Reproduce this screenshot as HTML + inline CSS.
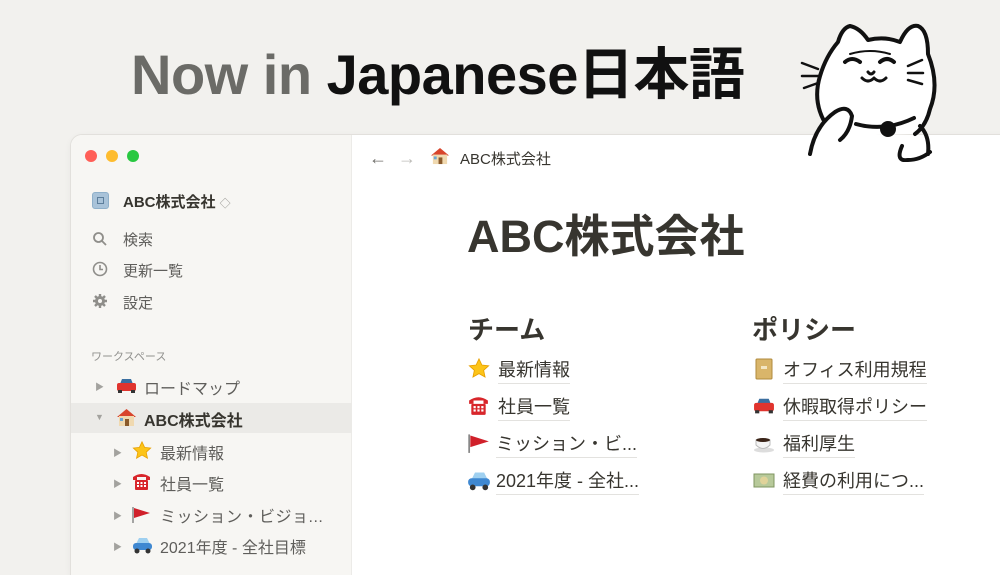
<!DOCTYPE html>
<html><head><meta charset="utf-8"><style>
*{margin:0;padding:0;box-sizing:border-box}
body{width:1000px;height:563px;overflow:hidden;background:#f2f1ee;font-family:"Liberation Sans","Noto Sans CJK JP",sans-serif;position:relative}
.abs{position:absolute;white-space:nowrap}
h1{position:absolute;left:131px;top:40px;font-size:56px;font-weight:700;letter-spacing:-0.5px;color:#111;white-space:nowrap;line-height:70px}
h1 .g{color:#6b6b67}
.win{position:absolute;left:71px;top:135px;width:940px;height:440px;background:#fff;border-radius:11px 0 0 0;overflow:hidden;box-shadow:0 0 0 1px #e2e0dc,0 2px 8px rgba(0,0,0,.06)}
.side{position:absolute;left:0;top:0;width:281px;height:440px;background:#f7f6f3;border-right:1px solid #ecebe8}
.dot{position:absolute;top:15px;width:12px;height:12px;border-radius:50%}
.s{font-size:15px;color:#5f5e5b}
.t{font-size:15px;color:#37352f}
.arr{font-size:9px;color:#a3a29e}
.it{font-size:18px;color:#37352f;border-bottom:1px solid #e3e2df;padding-bottom:1px}
</style></head><body>
<h1><span class="g">Now in </span>Japanese日本語</h1>

<div class="win">
 <div class="side">
  <div class="dot" style="left:14px;background:#ff5f57"></div>
  <div class="dot" style="left:35px;background:#febc2e"></div>
  <div class="dot" style="left:56px;background:#28c840"></div>
  <div class="abs" style="left:21px;top:57px;width:17px;height:17px;background:#a9c3d9;border-radius:3px;border:1px solid #8fb0ca"><div style="margin:4px;width:7px;height:7px;border:1px solid #5d7f9c"></div></div>
  <div class="abs t" style="left:52px;top:56px;font-weight:600">ABC株式会社 <span style="color:#a3a29e;font-size:11px">◇</span></div>
  <svg class="abs" style="left:21px;top:96px" width="16" height="16" viewBox="0 0 16 16" fill="none" stroke="#8f8e8a" stroke-width="1.8"><circle cx="6.5" cy="6.5" r="4.5"/><path d="M10 10l4 4"/></svg>
  <div class="abs s" style="left:52px;top:94px">検索</div>
  <svg class="abs" style="left:21px;top:126px" width="16" height="16" viewBox="0 0 16 16" fill="none" stroke="#8f8e8a" stroke-width="1.6"><circle cx="8" cy="8" r="6.5"/><path d="M8 4v4.5h3"/></svg>
  <div class="abs s" style="left:52px;top:125px">更新一覧</div>
  <svg class="abs" style="left:21px;top:158px" width="16" height="16" viewBox="0 0 16 16"><circle cx="8" cy="8" r="5" fill="#8f8e8a"/><g stroke="#8f8e8a" stroke-width="2.4"><path d="M8 1v14M1 8h14M3 3l10 10M13 3L3 13"/></g><circle cx="8" cy="8" r="2" fill="#f7f6f3"/></svg>
  <div class="abs s" style="left:52px;top:157px">設定</div>
  <div class="abs" style="left:20px;top:213px;font-size:11px;color:#91918e">ワークスペース</div>

  <div class="abs arr" style="left:24px;top:245px">▶</div>
  <svg class="abs" style="left:45px;top:242px" width="21" height="17" viewBox="0 0 21 17"><path d="M4 7l2-5h9l2 5z" fill="#3b6fa0"/><rect x="1" y="6" width="19" height="8" rx="2" fill="#e0342e"/><rect x="2" y="13" width="4" height="3" fill="#333"/><rect x="15" y="13" width="4" height="3" fill="#333"/></svg>
  <div class="abs s" style="left:73px;top:240px;font-size:16px">ロードマップ</div>

  <div class="abs" style="left:0;top:268px;width:281px;height:30px;background:#ebeae7"></div>
  <div class="abs arr" style="left:24px;top:277px">▼</div>
  <svg class="abs" style="left:45px;top:273px" width="21" height="19" viewBox="0 0 21 19"><path d="M1 9L10.5 1 20 9z" fill="#d8452c"/><rect x="3" y="8" width="15" height="10" fill="#f0d9b0"/><rect x="9" y="11" width="4" height="7" fill="#8a5a2b"/><rect x="4" y="10" width="3" height="3" fill="#6aa7d6"/></svg>
  <div class="abs t" style="left:73px;top:272px;font-weight:700;font-size:16px">ABC株式会社</div>

  <div class="abs arr" style="left:42px;top:311px">▶</div>
  <svg class="abs" style="left:61px;top:306px" width="20" height="19" viewBox="0 0 24 24"><path d="M12 1l3.3 7 7.7.9-5.7 5.2 1.6 7.6L12 17.8 5.1 21.7l1.6-7.6L1 8.9l7.7-.9z" fill="#fcc419" stroke="#e8a000"/></svg>
  <div class="abs s" style="left:89px;top:305px;font-size:16px">最新情報</div>

  <div class="abs arr" style="left:42px;top:342px">▶</div>
  <svg class="abs" style="left:61px;top:337px" width="19" height="19" viewBox="0 0 19 19"><path d="M1 5q8.5-6 17 0v3H14V5H5v3H1z" fill="#d8262b"/><rect x="3" y="8" width="13" height="10" rx="1" fill="#d8262b"/><g fill="#fff"><rect x="5" y="10" width="2" height="2"/><rect x="8.5" y="10" width="2" height="2"/><rect x="12" y="10" width="2" height="2"/><rect x="5" y="13" width="2" height="2"/><rect x="8.5" y="13" width="2" height="2"/><rect x="12" y="13" width="2" height="2"/></g></svg>
  <div class="abs s" style="left:89px;top:336px;font-size:16px">社員一覧</div>

  <div class="abs arr" style="left:42px;top:374px">▶</div>
  <svg class="abs" style="left:61px;top:370px" width="19" height="18" viewBox="0 0 19 18"><path d="M1 2v16" stroke="#888" stroke-width="1.5"/><path d="M2 3l16 5-16 5z" fill="#d0202a"/></svg>
  <div class="abs s" style="left:89px;top:368px;font-size:16px;letter-spacing:0.5px">ミッション・ビジョ...</div>

  <div class="abs arr" style="left:42px;top:405px">▶</div>
  <svg class="abs" style="left:61px;top:401px" width="21" height="18" viewBox="0 0 21 18"><path d="M4 8l3-6h8l3 6z" fill="#9fd0f0"/><rect x="1" y="7" width="19" height="7" rx="3" fill="#3f88d1"/><circle cx="5" cy="15" r="2.5" fill="#333"/><circle cx="16" cy="15" r="2.5" fill="#333"/></svg>
  <div class="abs s" style="left:89px;top:399px;font-size:16px">2021年度 - 全社目標</div>
 </div>

 <div class="abs" style="left:298px;top:13px;font-size:18px;color:#6f6e6a">←</div>
 <div class="abs" style="left:327px;top:13px;font-size:18px;color:#bdbcb8">→</div>
 <svg class="abs" style="left:359px;top:12px" width="20" height="18" viewBox="0 0 21 19"><path d="M1 9L10.5 1 20 9z" fill="#d8452c"/><rect x="3" y="8" width="15" height="10" fill="#f0d9b0"/><rect x="9" y="11" width="4" height="7" fill="#8a5a2b"/><rect x="4" y="10" width="3" height="3" fill="#6aa7d6"/></svg>
 <div class="abs" style="left:389px;top:13px;font-size:15px;color:#37352f">ABC株式会社</div>

 <div class="abs" style="left:396px;top:74px;font-size:45px;font-weight:700;color:#37352f;line-height:56px">ABC株式会社</div>

 <div class="abs" style="left:397px;top:175px;font-size:26px;font-weight:700;color:#37352f">チーム</div>
 <div class="abs" style="left:681px;top:175px;font-size:26px;font-weight:700;color:#37352f">ポリシー</div>

 <svg class="abs" style="left:397px;top:223px" width="22" height="21" viewBox="0 0 24 24"><path d="M12 1l3.3 7 7.7.9-5.7 5.2 1.6 7.6L12 17.8 5.1 21.7l1.6-7.6L1 8.9l7.7-.9z" fill="#fcc419" stroke="#e8a000"/></svg>
 <div class="abs it" style="left:427px;top:221px">最新情報</div>
 <svg class="abs" style="left:397px;top:260px" width="21" height="21" viewBox="0 0 19 19"><path d="M1 5q8.5-6 17 0v3H14V5H5v3H1z" fill="#d8262b"/><rect x="3" y="8" width="13" height="10" rx="1" fill="#d8262b"/><g fill="#fff"><rect x="5" y="10" width="2" height="2"/><rect x="8.5" y="10" width="2" height="2"/><rect x="12" y="10" width="2" height="2"/><rect x="5" y="13" width="2" height="2"/><rect x="8.5" y="13" width="2" height="2"/><rect x="12" y="13" width="2" height="2"/></g></svg>
 <div class="abs it" style="left:427px;top:258px">社員一覧</div>
 <svg class="abs" style="left:397px;top:297px" width="22" height="21" viewBox="0 0 19 18"><path d="M1 2v16" stroke="#888" stroke-width="1.5"/><path d="M2 3l16 5-16 5z" fill="#d0202a"/></svg>
 <div class="abs it" style="left:425px;top:295px">ミッション・ビ...</div>
 <svg class="abs" style="left:396px;top:335px" width="24" height="21" viewBox="0 0 21 18"><path d="M4 8l3-6h8l3 6z" fill="#9fd0f0"/><rect x="1" y="7" width="19" height="7" rx="3" fill="#3f88d1"/><circle cx="5" cy="15" r="2.5" fill="#333"/><circle cx="16" cy="15" r="2.5" fill="#333"/></svg>
 <div class="abs it" style="left:425px;top:332px">2021年度 - 全社...</div>

 <svg class="abs" style="left:684px;top:223px" width="18" height="22" viewBox="0 0 18 22"><rect x="1" y="1" width="16" height="20" rx="1" fill="#d9b56a" stroke="#b08a3c"/><rect x="6" y="8" width="6" height="3" fill="#f3e6c4"/></svg>
 <div class="abs it" style="left:712px;top:221px">オフィス利用規程</div>
 <svg class="abs" style="left:682px;top:261px" width="22" height="19" viewBox="0 0 21 17"><path d="M4 7l2-5h9l2 5z" fill="#3b6fa0"/><rect x="1" y="6" width="19" height="8" rx="2" fill="#e0342e"/><rect x="2" y="13" width="4" height="3" fill="#333"/><rect x="15" y="13" width="4" height="3" fill="#333"/></svg>
 <div class="abs it" style="left:712px;top:258px">休暇取得ポリシー</div>
 <svg class="abs" style="left:682px;top:298px" width="22" height="20" viewBox="0 0 22 20"><ellipse cx="11" cy="17" rx="10" ry="2.5" fill="#ddd"/><path d="M3 7h14v5q-7 7-14 0z" fill="#f4f4f4" stroke="#bbb"/><ellipse cx="10" cy="7" rx="7" ry="2" fill="#3a2418"/></svg>
 <div class="abs it" style="left:712px;top:295px">福利厚生</div>
 <svg class="abs" style="left:682px;top:337px" width="22" height="17" viewBox="0 0 22 17"><rect x="1" y="2" width="20" height="13" fill="#b7c99a" stroke="#7f9560"/><circle cx="11" cy="8.5" r="4" fill="#e0d39a"/></svg>
 <div class="abs it" style="left:712px;top:332px">経費の利用につ...</div>
</div>

<svg class="abs" style="left:790px;top:14px" width="150" height="148" viewBox="0 0 150 148" fill="none" stroke="#111" stroke-width="4" stroke-linecap="round" stroke-linejoin="round">
 <path d="M45 122 Q20 95 30 62 Q36 42 48 28 Q52 14 60 12 Q70 14 78 26 Q95 22 110 28 Q118 10 128 12 Q138 16 138 40 Q150 70 140 95 Q136 112 125 120" fill="#fff"/>
 <path d="M60 40 Q80 34 100 40" stroke-width="2"/>
 <path d="M55 48 Q62 42 70 48"/><path d="M90 48 Q97 42 104 48"/>
 <path d="M78 58 q3 4 6 0 M72 64 q6 6 12 0 q6 6 12 0" stroke-width="3"/>
 <path d="M28 55 l-16 -6 M28 62 l-16 0 M28 69 l-14 5" stroke-width="2.5"/>
 <path d="M118 52 l14 -6 M118 59 l15 0 M118 66 l14 4" stroke-width="2.5"/>
 <path d="M20 140 Q25 112 45 98 Q58 90 62 102 Q60 118 50 126" fill="#fff"/>
 <path d="M66 110 Q95 118 124 104"/>
 <circle cx="98" cy="115" r="6" fill="#111"/>
 <path d="M130 112 Q140 122 138 140 M112 132 Q105 148 118 146 Q130 146 140 138"/>
</svg>
</body></html>
